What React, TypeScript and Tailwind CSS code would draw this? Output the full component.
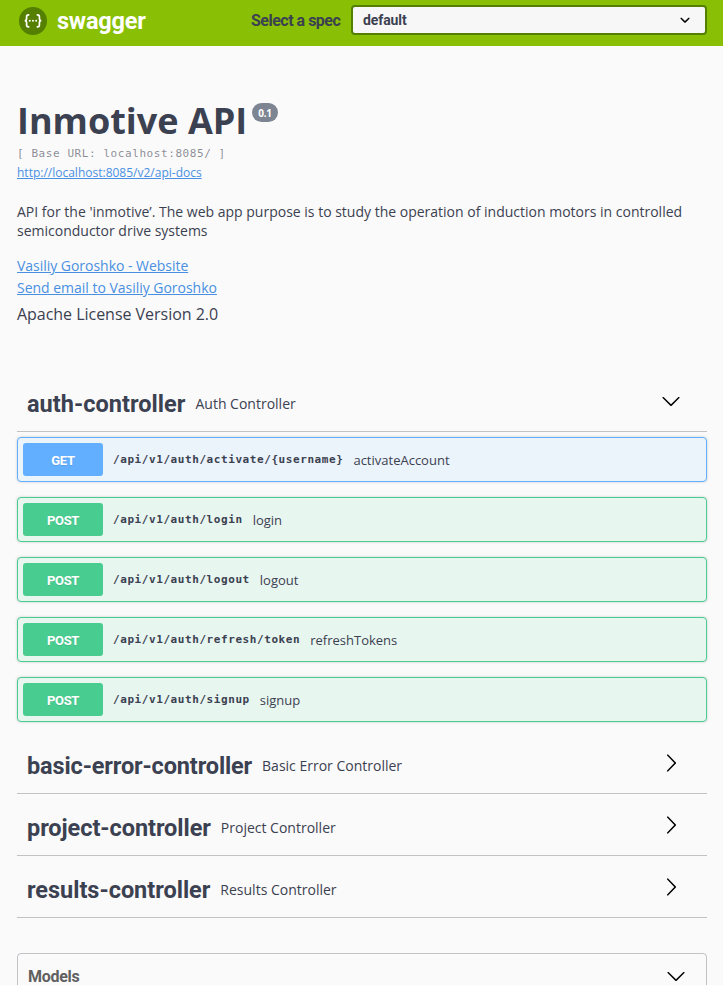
import React from "react";

const heading = "font-['Roboto','Open_Sans',sans-serif] font-bold";
const mono = "font-['DejaVu_Sans_Mono','Liberation_Mono',monospace]";

function Down() {
  return (
    <svg width="20" height="20" viewBox="0 0 20 20" className="shrink-0">
      <path d="M17.418 6.109c.272-.268.709-.268.979 0s.271.701 0 .969l-7.908 7.83c-.27.268-.707.268-.979 0l-7.908-7.83c-.27-.268-.27-.701 0-.969.271-.268.709-.268.979 0L10 13.25l7.418-7.141z" />
    </svg>
  );
}

function Right() {
  return (
    <svg width="20" height="20" viewBox="0 0 20 20" className="shrink-0">
      <path d="M13.25 10L6.109 2.58c-.268-.27-.268-.707 0-.979.268-.27.701-.27.969 0l7.83 7.908c.268.271.268.709 0 .979l-7.83 7.908c-.268.271-.701.27-.969 0-.268-.269-.268-.707 0-.979L13.25 10z" />
    </svg>
  );
}

type TagProps = { name: string; text: string; spacing: string; open?: boolean };

function Tag({ name, text, spacing, open }: TagProps) {
  return (
    <div className="flex h-[57px] items-center border-b border-[#3b4151]/30 pl-2.5 pr-[26px]">
      <h3 className={`${heading} ${spacing} whitespace-nowrap pt-0.5 text-[23.5px] leading-[30px]`}>{name}</h3>
      <span className="flex-1 whitespace-nowrap pl-2.5 pt-0.5 text-[14px] leading-5">{text}</span>
      <span className="mb-[5px]">{open ? <Down /> : <Right />}</span>
    </div>
  );
}

type OpProps = { method: "GET" | "POST"; path: string; text: string };

function Operation({ method, path, text }: OpProps) {
  const get = method === "GET";
  return (
    <div
      className={`flex h-[45px] items-center rounded border p-[5px] shadow-[0_0_3px_rgba(0,0,0,0.19)] ${
        get ? "border-[#61affe] bg-[#ebf3fb]" : "border-[#49cc90] bg-[#e8f6f0]"
      }`}
    >
      <span
        className={`flex h-[33px] w-20 items-center justify-center rounded-[3px] pt-0.5 text-[13px] leading-5 text-white [text-shadow:0_1px_0_rgba(0,0,0,0.1)] ${heading} ${
          get ? "bg-[#61affe] tracking-[-0.3px]" : "bg-[#49cc90] tracking-[-0.3px]"
        }`}
      >
        {method}
      </span>
      <span className={`${mono} whitespace-nowrap px-2.5 text-[11px] font-bold leading-4 tracking-[0.578px]`}>{path}</span>
      <span className="whitespace-nowrap text-[13px] leading-[18px]">{text}</span>
    </div>
  );
}

export default function App() {
  return (
    <div className="h-[985px] w-[723px] overflow-hidden bg-[#fafafa] font-['Open_Sans',sans-serif] text-[#3b4151]">
      <header className="flex h-[46px] items-start bg-[#89bf04] pl-[19px] pr-4 pt-[5px]">
        <svg width="28" height="30" viewBox="0 0 28 30" className="shrink-0">
          <circle cx="14" cy="16" r="14" fill="#547f00" />
          <g fill="none" stroke="#fff" strokeWidth="1.7">
            <path d="M10.3 9.8H9.4Q7.6 9.8 7.6 11.7V13.6Q7.6 15.7 5.7 15.7Q7.6 15.7 7.6 17.8V19.9Q7.6 21.8 9.4 21.8H10.3" />
            <path d="M17.7 9.8H18.6Q20.4 9.8 20.4 11.7V13.6Q20.4 15.7 22.3 15.7Q20.4 15.7 20.4 17.8V19.9Q20.4 21.8 18.6 21.8H17.7" />
          </g>
          <g fill="#fff">
            <circle cx="10.8" cy="15.8" r="1" />
            <circle cx="14" cy="15.8" r="1" />
            <circle cx="17.2" cy="15.8" r="1" />
          </g>
        </svg>
        <span className={`${heading} w-[204px] pl-2.5 text-[23.5px] leading-8 tracking-[-0.2px] text-white`}>swagger</span>
        <span className={`${heading} w-[100px] whitespace-nowrap text-[16px] leading-[31px] tracking-[-0.5px]`}>Select a spec</span>
        <div className="flex h-[30px] flex-1 items-center justify-between rounded border-2 border-[#547f00] bg-[#f7f7f7] pl-2.5 pr-2.5">
          <span className={`${heading} text-[14px] leading-5 tracking-[-0.1px]`}>default</span>
          <svg width="20" height="20" viewBox="0 0 20 20">
            <path d="M13.418 7.859c.271-.268.709-.268.978 0s.272.701 0 .969l-3.908 3.83c-.27.268-.707.268-.979 0l-3.908-3.83c-.27-.267-.27-.701 0-.969.271-.268.709-.268.978 0L10 11l3.418-3.141z" />
          </svg>
        </div>
      </header>

      <main className="px-4 pl-[17px]">
        <section className="pt-[50px]">
          <h1 className="flex h-[50px] items-start gap-[5px] text-[36px] font-bold leading-[49px]">
            <span>Inmotive API</span>
            <small className="mt-[7px] flex h-[19px] items-center rounded-full bg-[#7d8492] px-[6px] text-[10px] leading-none tracking-[-0.3px] text-white">0.1</small>
          </h1>
          <pre className={`${mono} h-[18px] text-[11px] leading-4 tracking-[0.578px] text-[#3b4151]/60`}>[ Base URL: localhost:8085/ ]</pre>
          <a className="block h-5 w-fit text-[12px] leading-[18px] text-[#4990e2] underline">http://localhost:8085/v2/api-docs</a>
          <p className="mt-[18px] text-[14px] leading-[19px]">
            API for the 'inmotive’. The web app purpose is to study the operation of induction motors in controlled semiconductor drive systems
          </p>
          <a className="mt-[15px] block h-[22px] w-fit text-[14px] leading-[22px] tracking-[-0.03px] text-[#4990e2] underline">Vasiliy Goroshko - Website</a>
          <a className="block h-[22px] w-fit text-[14px] leading-[22px] tracking-[-0.02px] text-[#4990e2] underline">Send email to Vasiliy Goroshko</a>
          <div className="mt-[4px] h-[22px] text-[16px] leading-[22px] tracking-[-0.03px]">Apache License Version 2.0</div>
        </section>

        <section className="pt-[50px]">
          <Tag name="auth-controller" text="Auth Controller" spacing="tracking-[0.03px]" open />
          <div className="flex flex-col gap-[15px] pb-[15px] pt-[5px]">
            <Operation method="GET" path="/api/v1/auth/activate/{username}" text="activateAccount" />
            <Operation method="POST" path="/api/v1/auth/login" text="login" />
            <Operation method="POST" path="/api/v1/auth/logout" text="logout" />
            <Operation method="POST" path="/api/v1/auth/refresh/token" text="refreshTokens" />
            <Operation method="POST" path="/api/v1/auth/signup" text="signup" />
          </div>
          <div className="flex flex-col gap-[5px]">
            <Tag name="basic-error-controller" text="Basic Error Controller" spacing="tracking-[-0.14px]" />
            <Tag name="project-controller" text="Project Controller" spacing="tracking-[-0.06px]" />
            <Tag name="results-controller" text="Results Controller" spacing="tracking-[-0.02px]" />
          </div>
        </section>

        <section className="mt-[35px] flex h-20 items-start justify-between rounded border border-[#3b4151]/30 pl-2.5 pr-5 pt-3">
          <h4 className={`${heading} text-[16px] leading-[22px] tracking-[-0.3px] text-[#606060]`}>Models</h4>
          <Down />
        </section>
      </main>
    </div>
  );
}
